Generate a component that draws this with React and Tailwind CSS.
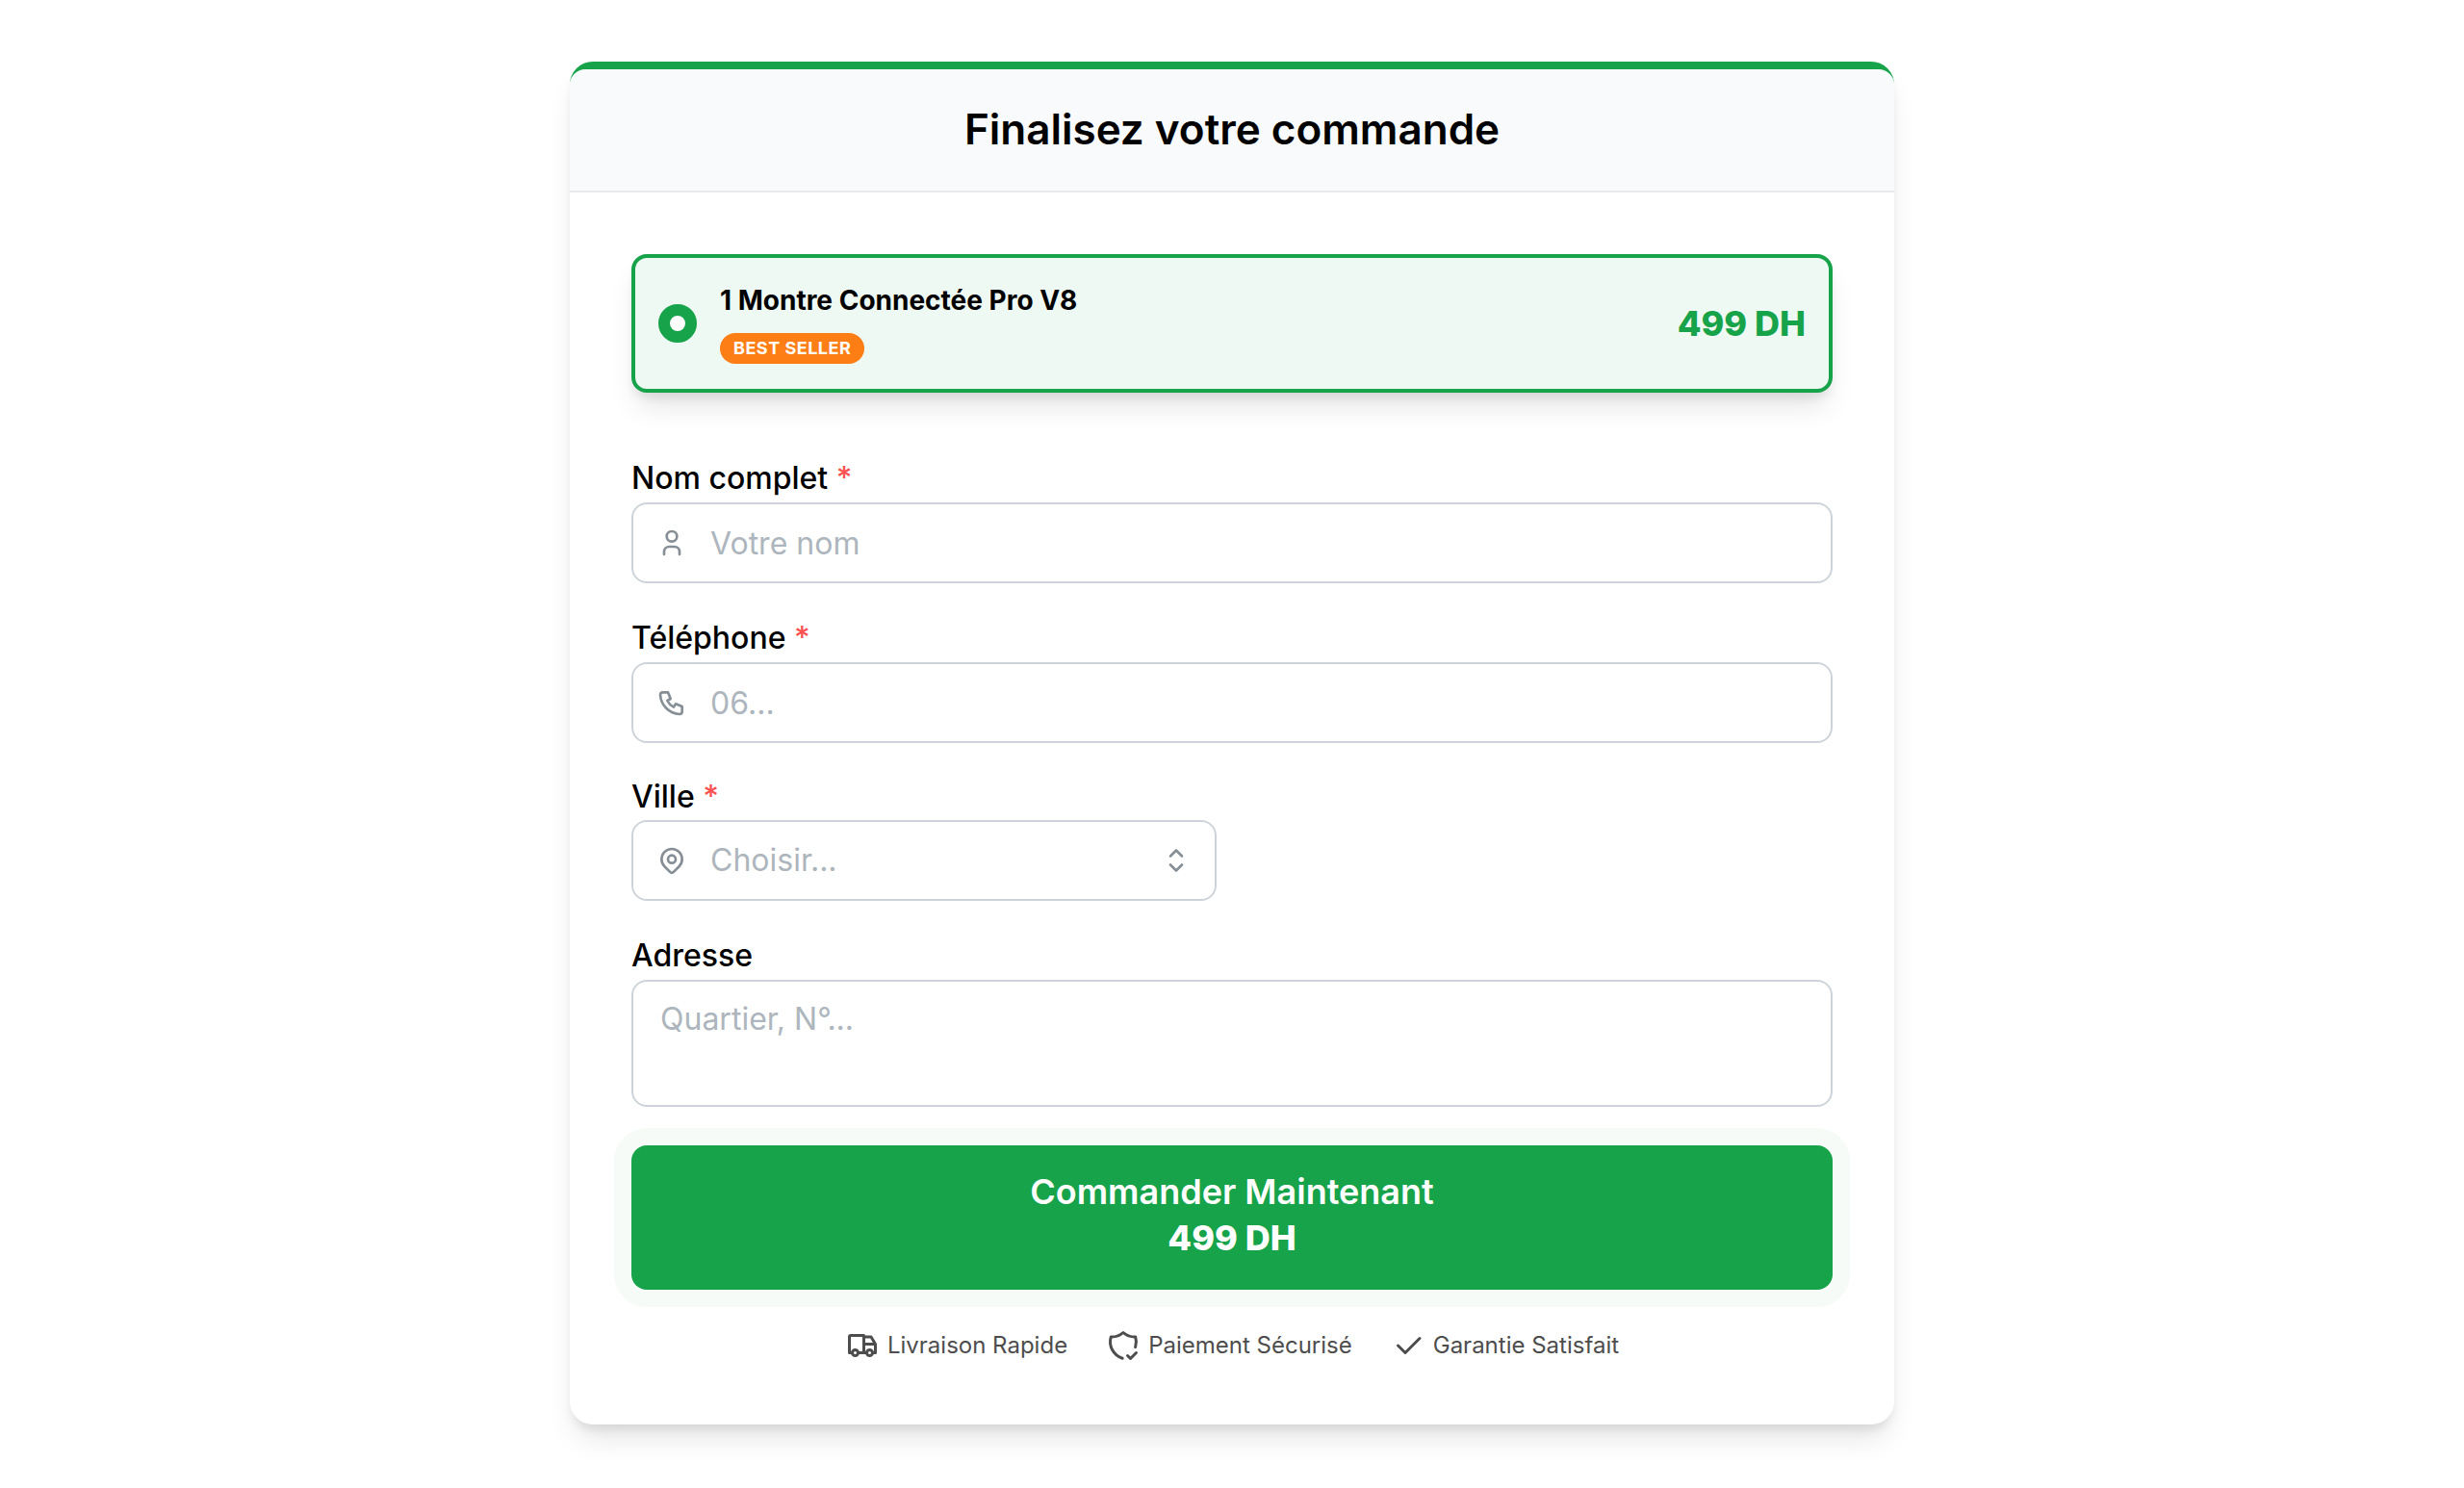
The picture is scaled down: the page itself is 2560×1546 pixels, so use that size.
import React, { useState } from "react";
import {
  TbCheck,
  TbMapPin,
  TbPhone,
  TbSelector,
  TbShieldCheck,
  TbTruck,
  TbUser,
} from "react-icons/tb";

const cities = ["Casablanca", "Rabat", "Marrakech", "Tanger", "Fès", "Agadir"];

const offers = [
  {
    id: "v8",
    name: "1 Montre Connectée Pro V8",
    badge: "BEST SELLER",
    price: "499 DH",
  },
];

const fieldClass =
  "w-full rounded-2xl border-2 border-[#ced4da] bg-white text-[32px] text-black placeholder:text-[#adb5bd] placeholder:opacity-100 focus:outline-none focus:border-[#16a34a]";

function FieldLabel({ htmlFor, required, compact, children }) {
  return (
    <label
      htmlFor={htmlFor}
      className={`block text-[32px] font-medium text-black ${
        compact ? "leading-[48px]" : "leading-[50px]"
      }`}
    >
      {children}
      {required && <span className="text-[#fa5252]"> *</span>}
    </label>
  );
}

function IconField({ id, label, icon, ...props }) {
  return (
    <div>
      <FieldLabel htmlFor={id} required>
        {label}
      </FieldLabel>
      <div className="relative">
        <span className="absolute inset-y-0 left-0 w-[84px] flex items-center justify-center text-[#868e96] pointer-events-none">
          {icon}
        </span>
        <input
          id={id}
          className={`${fieldClass} h-[84px] pl-20 pr-6`}
          {...props}
        />
      </div>
    </div>
  );
}

function OfferCard({ offer, checked, onSelect }) {
  return (
    <label className="flex items-center gap-6 rounded-2xl border-4 border-[#16a34a] bg-[#eff9f3] px-6 py-[26px] cursor-pointer shadow-[0_20px_30px_-6px_rgba(0,0,0,0.1),0_8px_12px_-4px_rgba(0,0,0,0.1)]">
      <input
        type="radio"
        name="offer"
        checked={checked}
        onChange={onSelect}
        className="appearance-none shrink-0 size-10 rounded-full bg-white border-2 border-[#ced4da] checked:border-12 checked:border-[#16a34a]"
      />
      <div className="flex flex-col items-start gap-4 flex-1">
        <span className="text-[28px] leading-9 font-bold text-black">
          {offer.name}
        </span>
        <span className="h-8 px-3.5 rounded-full bg-[#fd7e14] text-white text-[18px] leading-8 font-bold tracking-[0.5px]">
          {offer.badge}
        </span>
      </div>
      <span className="text-[36px] leading-10 font-extrabold text-[#16a34a]">
        {offer.price}
      </span>
    </label>
  );
}

export default function App() {
  const [offerId, setOfferId] = useState("v8");
  const [city, setCity] = useState("");
  const selected = offers.find((o) => o.id === offerId);

  return (
    <div className="min-h-screen bg-white px-8 py-16 font-['Inter',sans-serif]">
      <main className="w-full max-w-[1376px] mx-auto rounded-3xl border-t-8 border-[#16a34a] bg-white shadow-[0_20px_30px_-6px_rgba(0,0,0,0.1),0_8px_12px_-4px_rgba(0,0,0,0.1)]">
        <header className="rounded-t-2xl bg-[#f8fafc] border-b-2 border-[#e9ecef] pt-8 pb-[34px] text-center">
          <h1 className="text-[44px] leading-[60px] font-semibold text-black">
            Finalisez votre commande
          </h1>
        </header>

        <form className="p-16" onSubmit={(e) => e.preventDefault()}>
          {offers.map((offer) => (
            <OfferCard
              key={offer.id}
              offer={offer}
              checked={offer.id === offerId}
              onSelect={() => setOfferId(offer.id)}
            />
          ))}

          <div className="mt-16 flex flex-col gap-8">
            <IconField
              id="name"
              label="Nom complet"
              placeholder="Votre nom"
              icon={<TbUser size={32} />}
            />
            <IconField
              id="phone"
              type="tel"
              label="Téléphone"
              placeholder="06..."
              icon={<TbPhone size={32} />}
            />

            <div className="grid grid-cols-2 gap-8">
              <div>
                <FieldLabel htmlFor="city" required compact>
                  Ville
                </FieldLabel>
                <div className="relative">
                  <span className="absolute inset-y-0 left-0 w-[84px] flex items-center justify-center text-[#868e96] pointer-events-none">
                    <TbMapPin size={32} />
                  </span>
                  <select
                    id="city"
                    value={city}
                    onChange={(e) => setCity(e.target.value)}
                    className={`${fieldClass} h-[84px] pl-20 pr-20 appearance-none invalid:text-[#adb5bd]`}
                    required
                  >
                    <option value="" disabled>
                      Choisir...
                    </option>
                    {cities.map((c) => (
                      <option key={c} value={c}>
                        {c}
                      </option>
                    ))}
                  </select>
                  <span className="absolute inset-y-0 right-0 w-[84px] flex items-center justify-center text-[#868e96] pointer-events-none">
                    <TbSelector size={36} strokeWidth={1.75} />
                  </span>
                </div>
              </div>
            </div>

            <div>
              <FieldLabel htmlFor="address">Adresse</FieldLabel>
              <textarea
                id="address"
                placeholder="Quartier, N°..."
                className={`${fieldClass} block h-[132px] px-7 py-3.5 leading-[50px] resize-none`}
              />
            </div>
          </div>

          <button
            type="submit"
            className="mt-10 w-full rounded-2xl bg-[#16a34a] pt-6 pb-[30px] text-white text-[36px] leading-12 shadow-[0_0_0_18px_rgba(22,163,74,0.04)]"
          >
            <span className="block font-semibold">Commander Maintenant</span>
            <span className="block font-extrabold">{selected.price}</span>
          </button>

          <ul className="mt-10 flex flex-wrap items-center justify-center gap-10 text-[24px] leading-9 text-[#4d4d4d]">
            <li className="flex items-center gap-2">
              <TbTruck size={36} />
              Livraison Rapide
            </li>
            <li className="flex items-center gap-2">
              <TbShieldCheck size={36} />
              Paiement Sécurisé
            </li>
            <li className="flex items-center gap-2">
              <TbCheck size={36} />
              Garantie Satisfait
            </li>
          </ul>
        </form>
      </main>
    </div>
  );
}
